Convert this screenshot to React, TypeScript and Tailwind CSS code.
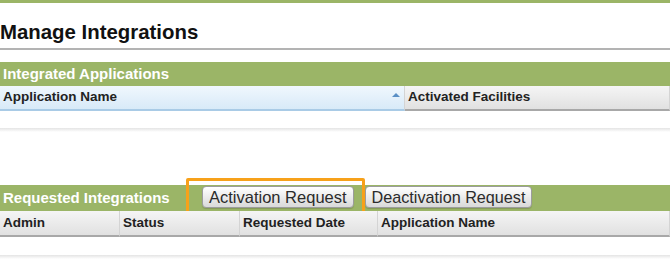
import React from 'react';

const font = { fontFamily: '"Liberation Sans", Arial, sans-serif' };

function HeaderCell({ label, className = '', sorted = false }: { label: string; className?: string; sorted?: boolean }) {
  return (
    <div
      className={`relative flex items-center h-full px-[3px] text-[13.5px] font-bold text-[#222] border-r border-[#d4d4d4] ${
        sorted
          ? 'bg-gradient-to-b from-[#f0f7fd] to-[#d8eaf8] border-b-2 border-b-[#a9cbe6]'
          : 'bg-gradient-to-b from-[#f5f5f5] to-[#e1e1e1] border-b-2 border-b-[#a8a8a8]'
      } ${className}`}
    >
      {label}
      {sorted && (
        <span className="absolute right-[4px] top-[7px] w-0 h-0 border-l-[4px] border-r-[4px] border-b-[4px] border-l-transparent border-r-transparent border-b-[#5a8fc5]" />
      )}
    </div>
  );
}

function Btn({ label, className = '' }: { label: string; className?: string }) {
  return (
    <button
      className={`h-[22px] rounded-[4px] border border-[#9c9c9c] bg-gradient-to-b from-white to-[#d9d9d9] leading-none text-[#2b2b2b] shadow-[0_1px_1px_rgba(0,0,0,0.15)] ${className}`}
    >
      {label}
    </button>
  );
}

export default function App() {
  return (
    <div className="w-[670px] h-[259px] bg-white overflow-hidden" style={font}>
      {/* top strip */}
      <div className="h-[3px] bg-[#9bb567]" />

      {/* page title */}
      <div className="pt-[17px] pb-[4px] border-b-2 border-[#b3b3b3]">
        <h1 className="text-[20.4px] leading-[24px] font-bold text-[#111]">Manage Integrations</h1>
      </div>

      {/* Integrated Applications */}
      <div className="mt-[12px]">
        <div className="h-[24px] flex items-center px-[3px] bg-[#9bb567] text-white text-[15px] font-bold">
          Integrated Applications
        </div>
        <div className="flex h-[25px]">
          <HeaderCell label="Application Name" className="w-[405px]" sorted />
          <HeaderCell label="Activated Facilities" className="flex-1" />
        </div>
        <div className="h-[17px]" />
        <div className="h-[4px] bg-gradient-to-b from-[#e4e4e4] to-white" />
      </div>

      {/* Requested Integrations */}
      <div className="mt-[53px]">
        <div className="h-[26px] flex items-center bg-[#9bb567]">
          <div className="w-[202px] px-[3px] text-white text-[15px] font-bold">Requested Integrations</div>
          <div className="relative">
            <Btn label="Activation Request" className="px-[6px] text-[16.5px]" />
            <span className="absolute -left-[16px] -right-[11px] -top-[8px] -bottom-[6px] border-[3px] border-[#f7a11a] rounded-[2px] pointer-events-none" />
          </div>
          <div className="ml-[11px]">
            <Btn label="Deactivation Request" className="px-[6px] text-[16.2px]" />
          </div>
        </div>
        <div className="flex h-[26px]">
          <HeaderCell label="Admin" className="w-[120px]" />
          <HeaderCell label="Status" className="w-[120px]" />
          <HeaderCell label="Requested Date" className="w-[138px]" />
          <HeaderCell label="Application Name" className="flex-1" />
        </div>
        <div className="h-[18px]" />
        <div className="h-[4px] bg-gradient-to-b from-[#e4e4e4] to-white" />
      </div>
    </div>
  );
}
